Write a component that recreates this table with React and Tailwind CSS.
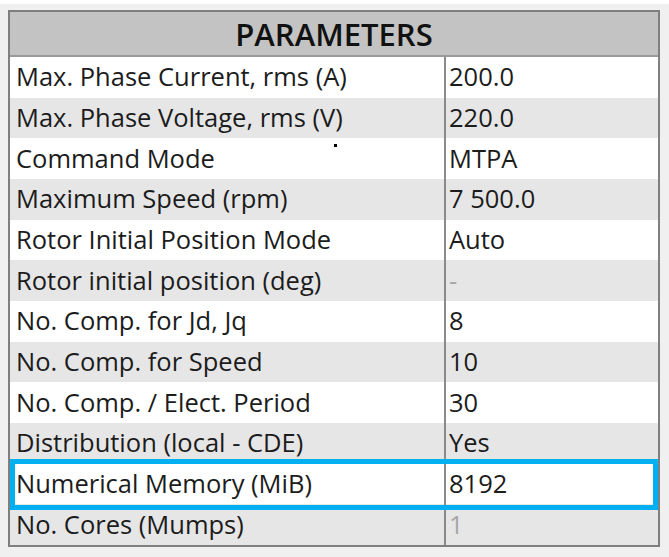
const rows = [
  ["Max. Phase Current, rms (A)", "200.0"],
  ["Max. Phase Voltage, rms (V)", "220.0"],
  ["Command Mode", "MTPA"],
  ["Maximum Speed (rpm)", "7 500.0"],
  ["Rotor Initial Position Mode", "Auto"],
  ["Rotor initial position (deg)", "-", true],
  ["No. Comp. for Jd, Jq", "8"],
  ["No. Comp. for Speed", "10"],
  ["No. Comp. / Elect. Period", "30"],
  ["Distribution (local - CDE)", "Yes"],
  ["Numerical Memory (MiB)", "8192"],
  ["No. Cores (Mumps)", "1", true],
];

export default function App() {
  return (
    <div
      className="w-[669px] h-[557px] bg-[#f0f0f0] border-t-4 border-white pt-[6px] pl-[8px]"
      style={{ fontFamily: '"Open Sans", sans-serif' }}
    >
      <div className="w-[652px] border-2 border-[#7f7f7f] bg-white">
        <div className="h-[45px] bg-[#c3c3c3] border-b-2 border-[#9a9a9a] flex items-center justify-center">
          <span className="text-[31px] font-semibold text-[#111] pt-[2px]">PARAMETERS</span>
        </div>
        <div className="grid grid-rows-12 h-[488px]">
          {rows.map(([label, value, muted], i) => (
            <div
              key={label}
              className={`relative flex text-[25.5px] text-[#1c1c1c] ${i % 2 === 0 ? "bg-white" : "bg-[#e6e6e6]"}`}
            >
              <div className="w-[436px] border-r-2 border-[#8a8a8a] pl-[6px] flex items-center pb-[2px] whitespace-nowrap">
                {label}
              </div>
              <div className={`flex-1 pl-[3px] flex items-center pb-[2px] ${muted ? "text-[#a6a6a6]" : ""}`}>
                {value}
              </div>
              {i === 2 && (
                <span className="absolute left-[324px] top-[6px] w-[3px] h-[3px] bg-black"></span>
              )}
              {i === 10 && (
                <div className="absolute z-10 left-0 right-0 -top-[5px] -bottom-[6px] border-[5px] border-[#00b0f0]"></div>
              )}
            </div>
          ))}
        </div>
      </div>
    </div>
  );
}
